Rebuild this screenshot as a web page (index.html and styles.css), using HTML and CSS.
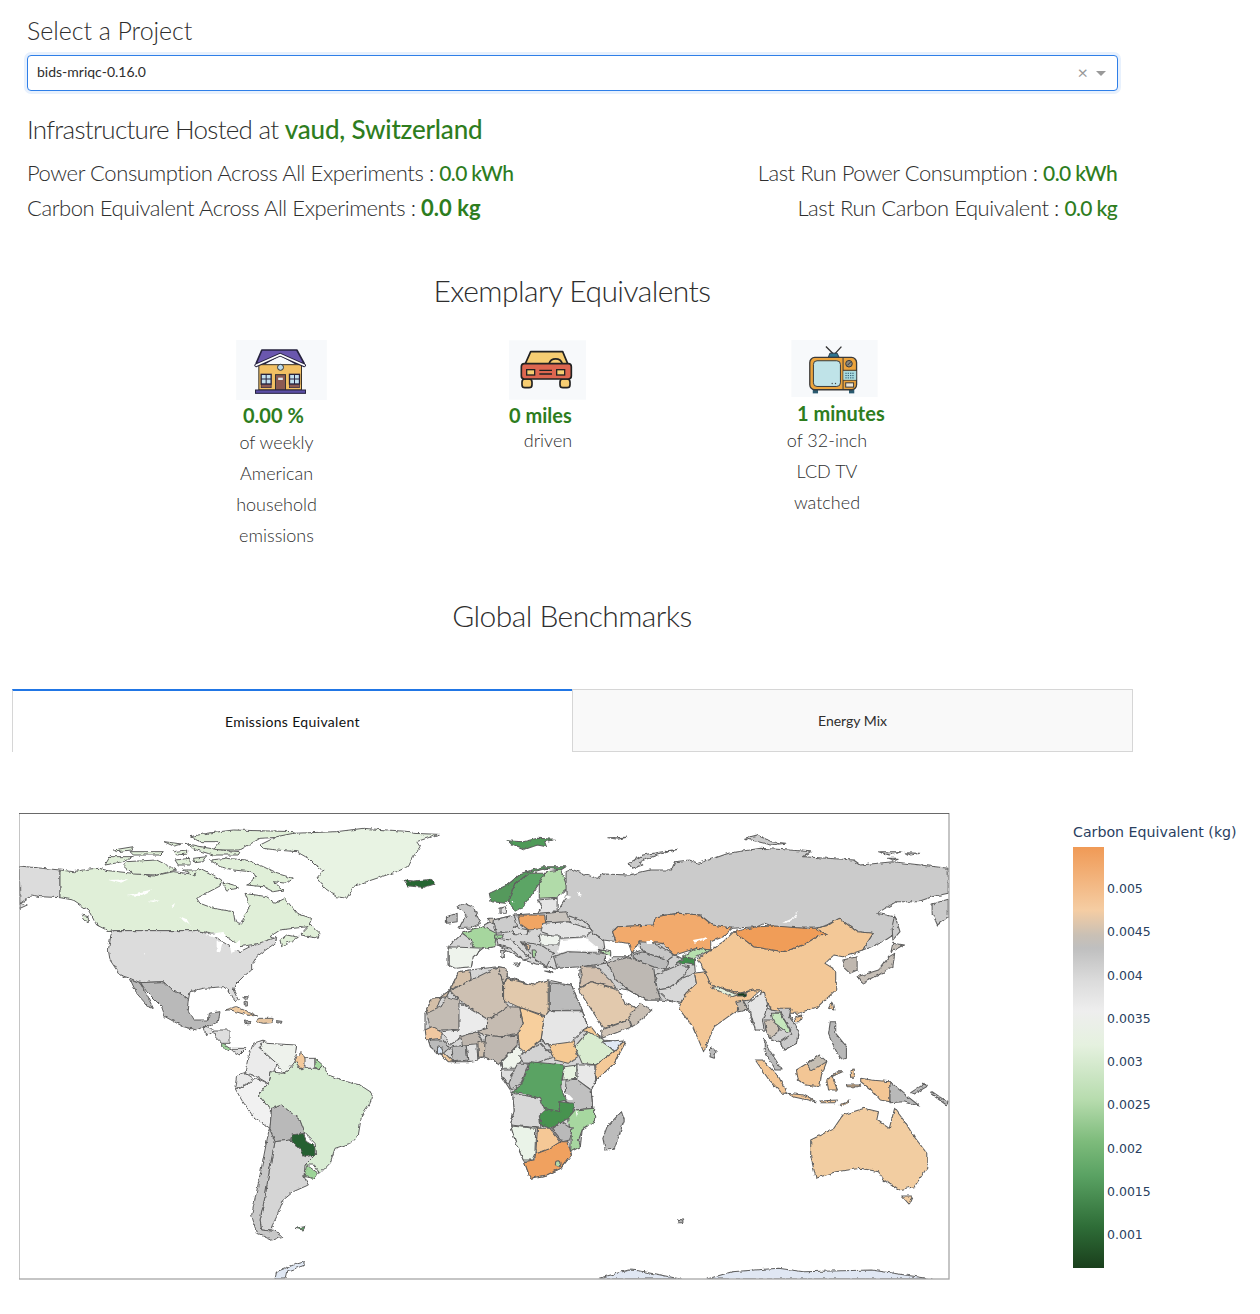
FILE: index.html
```html
<!DOCTYPE html>
<html lang="en">
<head>
<meta charset="UTF-8">
<meta name="viewport" content="width=device-width, initial-scale=1.0">
<title>Carbon Board</title>
<link rel="stylesheet" href="styles.css">
</head>
<body>
<div class="page">
    <section class="project">
        <h3 class="project-label">Select a Project</h3>
        <div class="select">
            <span class="select-value">bids-mriqc-0.16.0</span>
            <span class="select-clear">×</span>
            <span class="select-caret"></span>
        </div>
        <h3 class="hosted">Infrastructure Hosted at <span class="green-large">vaud, Switzerland</span></h3>
        <div class="stats">
            <div class="stats-col">
                <p>Power Consumption Across All Experiments : <span class="green-mid">0.0 kWh</span></p>
                <p>Carbon Equivalent Across All Experiments : <span class="green-bold">0.0 kg</span></p>
            </div>
            <div class="stats-col stats-right">
                <p>Last Run Power Consumption : <span class="green-mid">0.0 kWh</span></p>
                <p>Last Run Carbon Equivalent : <span class="green-mid">0.0 kg</span></p>
            </div>
        </div>
    </section>

    <h2 class="section-title title-equiv">Exemplary Equivalents</h2>

    <div class="equivalents">
        <div class="equiv equiv-house">
            <svg class="tile" width="91" height="60" viewBox="48 30 272 180">
                <rect x="48" y="30" width="272" height="180" fill="#f7f9fb"/>
                <path d="M125 60H230L252 100H225L180 74 135 100H108Z" fill="#6a57ae" stroke="#26233f" stroke-width="5" stroke-linejoin="round"/>
                <rect x="116" y="104" width="128" height="76" fill="#f2c063" stroke="#3a3328" stroke-width="3"/>
                <path d="M108 106 180 74 252 106" fill="none" stroke="#26233f" stroke-width="11" stroke-linecap="round"/>
                <path d="M108 106 180 74 252 106" fill="none" stroke="#fff" stroke-width="5" stroke-linecap="round"/>
                <circle cx="181" cy="112" r="9" fill="#bcdcee" stroke="#333" stroke-width="3"/>
                <rect x="166" y="134" width="30" height="46" fill="#8c5a52" stroke="#333" stroke-width="3"/>
                <rect x="174" y="143" width="14" height="7" fill="#dfe8ee"/>
                <rect x="123" y="133" width="30" height="29" fill="#c2e0ee" stroke="#26233f" stroke-width="4"/>
                <rect x="208" y="133" width="30" height="29" fill="#c2e0ee" stroke="#26233f" stroke-width="4"/>
                <path d="M138 133V162M123 147H153M223 133V162M208 147H238" stroke="#26233f" stroke-width="3"/>
                <rect x="123" y="163" width="30" height="10" fill="#8c5a52" stroke="#26233f" stroke-width="2"/>
                <rect x="208" y="163" width="30" height="10" fill="#8c5a52" stroke="#26233f" stroke-width="2"/>
                <rect x="106" y="180" width="150" height="10" fill="#5a4ea6" stroke="#26233f" stroke-width="3"/>
            </svg>
            <div class="equiv-value">0.00 %</div>
            <div class="equiv-text">of weekly American household emissions</div>
        </div>
        <div class="equiv equiv-car">
            <svg class="tile" width="77" height="60" viewBox="27 30 231 178">
                <rect x="27" y="30" width="231" height="178" fill="#f7f9fb"/>
                <path d="M75 102 92 64H188L204 102Z" fill="#f6cd72" stroke="#222" stroke-width="5" stroke-linejoin="round"/>
                <path d="M147 100A21 21 0 0 1 187 100" fill="none" stroke="#222" stroke-width="5"/>
                <rect x="66" y="146" width="30" height="26" rx="9" fill="#f6cd72" stroke="#222" stroke-width="5"/>
                <rect x="180" y="146" width="30" height="26" rx="9" fill="#f6cd72" stroke="#222" stroke-width="5"/>
                <rect x="64" y="100" width="150" height="46" rx="9" fill="#de6650" stroke="#222" stroke-width="5"/>
                <rect x="80" y="118" width="24" height="16" fill="#f6cd72" stroke="#222" stroke-width="4"/>
                <rect x="170" y="118" width="24" height="16" fill="#f6cd72" stroke="#222" stroke-width="4"/>
                <path d="M118 120H156M118 131H156" stroke="#222" stroke-width="4"/>
            </svg>
            <div class="equiv-value">0 miles</div>
            <div class="equiv-text">driven</div>
        </div>
        <div class="equiv equiv-tv">
            <svg class="tile" width="87" height="57" viewBox="33 30 262 173">
                <rect x="33" y="30" width="262" height="173" fill="#f7f9fb"/>
                <path d="M160 72 138 50M165 72 185 50" stroke="#333" stroke-width="4"/>
                <path d="M145 83 150 70H172L178 83Z" fill="#2f7590" stroke="#2a3a48" stroke-width="3"/>
                <rect x="98" y="178" width="16" height="14" fill="#2a5a70"/>
                <rect x="208" y="178" width="16" height="14" fill="#2a5a70"/>
                <rect x="89" y="83" width="142" height="98" rx="15" fill="#eca43c" stroke="#3a3a3a" stroke-width="4"/>
                <rect x="100" y="93" width="82" height="78" rx="11" fill="#bfe3e8" stroke="#3a3a3a" stroke-width="3"/>
                <path d="M190 83V181M190 122H231M190 152H231" stroke="#3a3a3a" stroke-width="3"/>
                <circle cx="208" cy="102" r="10" fill="#8a8a80" stroke="#3a3a3a" stroke-width="3"/>
                <path d="M203 107 213 97" stroke="#3a3a3a" stroke-width="3"/>
                <rect x="191" y="124" width="39" height="27" fill="#a9dbe0"/>
                <path d="M197 131H225M197 138H225M197 145H225" stroke="#2f5a70" stroke-width="3" stroke-dasharray="4 3"/>
                <rect x="198" y="160" width="24" height="13" fill="#ece6d8" stroke="#3a3a3a" stroke-width="3"/>
                <circle cx="157" cy="162" r="2" fill="#444"/>
                <circle cx="167" cy="162" r="2" fill="#444"/>
            </svg>
            <div class="equiv-value">1 minutes</div>
            <div class="equiv-text">of 32-inch LCD TV watched</div>
        </div>
    </div>

    <h2 class="section-title title-bench">Global Benchmarks</h2>

    <div class="tabs">
        <div class="tab tab-active">Emissions Equivalent</div>
        <div class="tab">Energy Mix</div>
    </div>

    <div class="chart">
        <svg class="map" width="931" height="467" viewBox="57 39 2793 1401">
            <defs>
                <filter id="rough" filterUnits="userSpaceOnUse" x="57" y="39" width="2790" height="1398">
                    <feTurbulence type="fractalNoise" baseFrequency="0.07" numOctaves="2" seed="4" result="noise"/>
                    <feDisplacementMap in="SourceGraphic" in2="noise" scale="11" xChannelSelector="R" yChannelSelector="G"/>
                    <feGaussianBlur stdDeviation="1.3"/>
                </filter>
            </defs>
            <g filter="url(#rough)">
            <g class="countries">
                <!-- americas -->
                <path fill="#dcdcdc" d="M58 198 180 210V293L120 290 95 285 75 300 60 310 82 315 60 325Z"/>
                <path fill="#e0efd8" d="M180 210 220 215 260 208 295 205 325 212 400 220 460 228 520 215 575 222 600 205 640 225 665 240 660 258 590 295 600 310 640 325 700 335 705 365 725 372 735 340 750 320 735 280 800 290 825 310 855 295 890 340 935 355 925 380 880 385 840 390 810 410 830 420 790 430 750 435 720 440 690 415 640 400 590 392H340L330 395 290 375 265 330 220 300 180 293Z"/>
                <path fill="#e0efd8" d="M630 180 680 175 740 180 790 200 830 220 880 235 860 250 820 245 850 270 820 275 790 260 740 255 770 230 750 215 700 210 660 200Z"/>
                <path fill="#e0efd8" d="M570 110 620 100 700 90 880 95 870 110 780 115 720 150 640 150 660 125 600 125Z"/>
                <path fill="#e0efd8" d="M380 185 470 180 530 210 470 225 400 222 370 195Z"/>
                <path fill="#e0efd8" d="M315 195 330 170 400 170 370 185Z"/>
                <path fill="#e0efd8" d="M340 150 400 140 395 150 350 155Z"/>
                <path fill="#e0efd8" d="M390 155 490 155 480 165 400 165Z"/>
                <path fill="#e0efd8" d="M492 125 545 132 520 138Z"/>
                <path fill="#e0efd8" d="M520 155 560 150 560 162 530 165Z"/>
                <path fill="#e0efd8" d="M525 180 570 175 570 195 535 195Z"/>
                <path fill="#e0efd8" d="M580 175 620 170 610 185 585 188Z"/>
                <path fill="#e0efd8" d="M555 130 600 140 660 150 720 155 715 165 640 165 590 150Z"/>
                <path fill="#e0efd8" d="M550 210 590 210 585 228Z"/>
                <path fill="#e0efd8" d="M665 245 700 255 715 265 680 270Z"/>
                <path fill="#e0efd8" d="M900 405 930 372 960 400 955 415Z"/>
                <path fill="#e0efd8" d="M840 420 860 405 895 412 860 430 845 440Z"/>
                <path fill="#e0efd8" d="M245 345 265 350 265 365 250 360Z"/>
                <path fill="#e8f3e3" d="M780 135 830 110 880 100 1010 95 1090 85 1230 95 1240 100 1315 103 1250 125 1260 140 1240 170 1225 200 1190 215 1100 245 1060 260 1040 295 1010 290 975 265 950 235 970 210 945 195 925 175 890 155 830 150 790 145Z"/>
                <path fill="#286630" d="M1212 240 1240 243 1295 238 1305 252 1270 262 1225 258Z"/>
                <path fill="#dcdcdc" d="M340 392H590L640 405 660 420 690 440 720 455 760 435 830 412 825 430 790 455 770 470 755 495 755 510 730 530 705 555 700 570 715 600 705 605 690 575 670 560 610 565 570 575 565 600 540 580 510 565 490 545 420 548 390 535 360 525 330 480 325 450 332 410Z"/>
                <path fill="#b9b9b9" d="M390 537 420 548 490 545 510 565 540 580 565 600 562 630 580 660 625 660 628 640 660 635 655 665 625 680 610 680 590 690 550 680 495 650 485 620 440 575 420 545 460 625 445 620 410 580Z"/>
                <path fill="#e5e5e5" d="M610 680H625L640 695 625 705 612 695Z"/>
                <path fill="#dedede" d="M640 690H690V730H665L645 710Z"/>
                <path fill="#9ed29a" d="M665 730 690 745 680 750 665 740Z"/>
                <path fill="#dddddd" d="M695 745H740L720 765 700 755Z"/>
                <path fill="#efcaa0" d="M675 630 710 620 770 648 740 645 690 630Z"/>
                <path fill="#e6c5a0" d="M775 655H820L815 668 790 670 770 665Z"/>
                <path fill="#aaaaaa" d="M733 663 750 665 748 672 735 670Z"/>
                <path fill="#aaaaaa" d="M830 662 846 664 844 670 832 668Z"/>
                <path fill="#b9b9b9" d="M730 590 745 590 740 600ZM732 605 742 605 742 618 733 618Z"/>
                <path fill="#ebebeb" d="M745 770 760 730 790 720 780 745 830 790 825 825 810 815 805 850 770 830 735 818Z"/>
                <path fill="#eef2ec" d="M790 720 800 730 890 735 885 770 895 785 865 810 850 820 830 790 780 745Z"/>
                <path fill="#f3c99b" d="M890 770 905 755 920 785 905 810 885 785Z"/>
                <path fill="#eeeeee" d="M915 775H945V805H915Z"/>
                <path fill="#a6d9a0" d="M945 775 968 795 955 810 945 805Z"/>
                <path fill="#e8e8e8" d="M710 825 735 818 760 835 720 865 705 860Z"/>
                <path fill="#f1f1f1" d="M705 865H720L770 835 805 850 775 885 800 915 815 925 810 985 760 950 725 900Z"/>
                <path fill="#b9b9b9" d="M815 925 845 915 900 960 915 1000 875 1010 870 1020 825 1025 810 985Z"/>
                <path fill="#d8ecd3" d="M810 815 850 820 865 810 885 785 905 810 915 805H945L955 810 968 795 985 825 1040 845 1080 855 1118 880 1110 910 1085 945 1075 1005 1050 1030 1005 1045 990 1090 960 1120 940 1095H915L950 1060 945 1030 915 1000 900 960 845 915 815 925 800 915 775 885 805 850Z"/>
                <path fill="#d5d5d5" d="M825 1025 870 1020 900 1045 915 1070 950 1060 915 1095 912 1130 925 1155 880 1175 850 1200 830 1250 815 1280 830 1295 785 1290 780 1260 795 1190 810 1100Z"/>
                <path fill="#c8c8c8" d="M808 985 825 1025 810 1100 795 1190 780 1260 785 1290 830 1295 850 1312 815 1320 770 1300 755 1245 775 1150 795 1050Z"/>
                <path fill="#256030" d="M875 1005 910 1000 920 1025 945 1040 945 1065 915 1070 900 1045 875 1025Z"/>
                <path fill="#9dd498" d="M920 1095 955 1120 945 1135 912 1130Z"/>
                <path fill="#5fa567" d="M885 1285 915 1280 910 1290Z"/>
                <path fill="#e0e8f4" d="M825 1437 830 1415 880 1395 915 1385V1395L860 1415 855 1437Z"/>
            </g>
            <g class="lakes">
                <path d="M325 240 385 238 360 250ZM380 285 460 268 420 288ZM445 302 480 300 460 306ZM515 320 525 312 520 326ZM538 348 560 358 572 378 550 362ZM615 405 670 395 680 412 640 412ZM650 425 668 425 660 457 650 455ZM690 440 720 420 720 448 695 458ZM430 460 435 460 432 465Z"/>
            </g>
            <g class="countries" transform="translate(1200 0) scale(1.0714 1)">
                <!-- land underlays so neighbours meet without gaps -->
                <path fill="#d5d5d5" d="M165 515 195 510 275 500 300 505V530L370 555 415 540 480 555 510 630 525 680 565 720 630 725 600 790 550 840 535 870 540 925 545 965 510 990 505 1040 478 1055 480 1065 450 1105 410 1125 365 1135 348 1085 325 1030 310 975 320 930 315 880 285 830V805L280 790 235 770 190 785H150L118 768 85 740 70 690V640L90 595 130 590Z"/>
                <path fill="#d5d5d5" d="M135 440 175 400 230 378 262 360 320 345 385 340 440 335 480 350 525 370 540 400 570 420 575 460V490L440 505 410 500 345 480 275 435 235 445 205 470 200 500 135 495Z"/>
                <path fill="#d0d0d0" d="M500 565 505 500 575 490 595 470H640L650 460 735 430 770 465 825 495 830 550 785 610 730 600H690L640 570 610 565 535 545Z"/>
                <path fill="#d0d0d0" d="M950 580 1040 630 1090 640 1115 690 1110 730 1075 750 1065 725 1035 715 1025 690H995L975 630Z"/>
                <!-- europe -->
                <path fill="#4f9a58" d="M297 122 345 125 385 115 435 118 405 125 410 140 385 135 350 148 320 135Z"/>
                <path fill="#b1dba9" d="M390 240 410 215 450 210 470 265 440 292 390 295Z"/>
                <path fill="#54995c" d="M250 280 300 255 340 220 400 200 465 200 450 210 410 205 360 220 320 255 310 295 295 310 255 305Z"/>
                <path fill="#5ba565" d="M320 255 360 220 405 220 390 250 365 290 345 320 320 335 305 300Z"/>
                <path fill="#cbcbcb" d="M465 215 480 208 550 235 570 222 640 225 700 210H760L770 185 810 180 835 190 880 175 920 160 1010 145 1090 150 1150 155 1130 170 1270 180 1290 195 1380 185 1535 205V280L1490 290 1450 305H1390L1335 340 1385 350 1395 395 1360 420 1320 440 1295 450 1325 400 1280 395 1230 355 1195 375 1165 385H1130L1050 380 1020 370 1000 380 930 385 875 375 840 345 780 340 715 350 710 375 610 380 595 395 605 425 570 420 540 400 525 370 480 350 440 335 465 295Z"/>
                <path fill="#cbcbcb" d="M1490 312 1535 298V350L1505 375 1490 340Z"/>
                <path fill="#cbcbcb" d="M640 190 680 165 778 148 720 165 670 185 680 195 650 205Z"/>
                <path fill="#cbcbcb" d="M965 115 1000 105 1040 125 1080 130 1040 135Z"/>
                <path fill="#cbcbcb" d="M582 113 635 112 610 118Z"/>
                <path fill="#cbcbcb" d="M1340 155 1405 155 1370 165ZM1415 158 1455 160 1430 165ZM1365 175 1395 175 1380 180Z"/>
                <path fill="#c8c8c8" d="M160 320 180 310 205 320 225 370 195 385 165 385 185 345Z"/>
                <path fill="#bbbbbb" d="M130 350 160 340V365L130 370Z"/>
                <path fill="#cccccc" d="M262 360 320 345 330 385 305 395 270 400Z"/>
                <path fill="#c8c3bd" d="M410 340 465 335 475 365 410 368Z"/>
                <path fill="#f0a564" d="M330 345H405L410 385 360 390 335 370Z"/>
                <path fill="#e5e5e5" d="M385 300 440 295V335L385 340 395 320Z"/>
                <path fill="#e3e3e3" d="M400 370 470 365 540 390 520 410 450 415 395 395Z"/>
                <path fill="#eff3ed" d="M390 405H445V435H395Z"/>
                <path fill="#a6d69e" d="M175 400 230 378 270 400 265 440 205 450 200 420Z"/>
                <path fill="#eef3ec" d="M135 440 235 445 205 470 200 500 155 505 135 495Z"/>
                <path fill="#dddddd" d="M270 415 310 420 365 475 345 480 310 445 275 435Z"/>
                <path fill="#cccccc" d="M340 425 395 435 430 460 410 500 380 480Z"/>
                <path fill="#dddddd" d="M315 380 360 390 355 405 315 400Z"/>
                <path fill="#c9c2b8" d="M245 355H265L262 375Z"/>
                <path fill="#9fd79a" d="M265 405H290L285 415H265Z"/>
                <path fill="#e5e5e5" d="M280 325 295 320 300 340H280Z"/>
                <path fill="#f0c79e" d="M345 430 365 440 360 447Z"/>
                <path fill="#a6d69e" d="M370 450 378 450 380 472 372 472Z"/>
                <path fill="#bfbfbf" d="M430 470 470 455 575 460V490L505 500 440 505Z"/>
                <path fill="#b8deb0" d="M555 448 590 455V465L565 460Z"/>
                <path fill="#dddddd" d="M282 448 292 450 292 475 282 470ZM315 490 340 488 330 500ZM405 513 430 515 425 519Z"/>
                <!-- africa -->
                <path fill="#d4bfa8" d="M130 590 165 515 195 510 200 540 140 570 115 590 100 635 70 640 90 595Z"/>
                <path fill="#cdc0b2" d="M140 572 200 540 275 500 290 555V600L305 620 245 658 165 600Z"/>
                <path fill="#c9bdb1" d="M275 500 300 505V530L290 555Z"/>
                <path fill="#e2c9ac" d="M290 555 300 535 370 555 415 540V650L330 620 290 600Z"/>
                <path fill="#bbbbbb" d="M418 548 480 555 510 630 418 632Z"/>
                <path fill="#e6e6e6" d="M418 632H510L525 680 485 720 480 745 415 735 395 720 400 680 405 650Z"/>
                <path fill="#f7cf9d" d="M335 622 405 650 400 680 395 720 355 755 335 745 330 700 345 670Z"/>
                <path fill="#c5bbb1" d="M245 658 305 620 335 622 345 670 330 700 280 710 240 705 215 695 245 680Z"/>
                <path fill="#ebebeb" d="M160 605 245 658V685L215 695 175 710 140 735 115 695 165 690Z"/>
                <path fill="#c3bcb4" d="M75 640 115 620 130 590 165 600V688L115 690 85 685Z"/>
                <path fill="#f0c7a0" d="M70 690 90 680 115 695V715L75 720Z"/>
                <path fill="#bbbbbb" d="M85 720H120L140 745 110 765 85 740Z"/>
                <path fill="#d8e5f4" d="M105 740 120 745 115 765 105 760Z"/>
                <path fill="#efca9f" d="M120 755 150 785H135L118 768Z"/>
                <path fill="#bbbbbb" d="M145 740 185 735 190 780 150 785Z"/>
                <path fill="#e2e2e2" d="M185 730H215L218 780 190 785Z"/>
                <path fill="#bdb5ad" d="M170 710 215 695 235 730 175 735Z"/>
                <path fill="#cfc0af" d="M218 725 240 720 235 770 220 772Z"/>
                <path fill="#bfb8b1" d="M240 705 280 710 330 705 328 735 280 790 235 770Z"/>
                <path fill="#eff4ec" d="M283 788 325 740 335 745 350 765 335 790 330 805 285 805Z"/>
                <path fill="#d3d3d3" d="M335 765 395 730 430 770 380 790H345Z"/>
                <path fill="#f5c993" d="M415 735 485 725 498 770 470 790 435 780Z"/>
                <path fill="#d9ecd0" d="M490 740 525 695 565 715 600 755 550 795 510 790Z"/>
                <path fill="#f5c993" d="M510 690 535 680 560 715 525 695Z"/>
                <path fill="#e0e8f4" d="M565 725 625 720 605 755Z"/>
                <path fill="#f4c998" d="M625 725 630 730 600 790 550 840 548 795 600 755Z"/>
                <path fill="#e8e8e8" d="M495 795H545L548 840 535 870 495 840Z"/>
                <path fill="#e6f2e0" d="M460 800 495 795V835L455 840Z"/>
                <path fill="#c0c0c0" d="M465 840 495 838 535 870 540 925 490 930 462 900Z"/>
                <path fill="#dddddd" d="M285 810H330L320 855 300 850 285 830Z"/>
                <path fill="#c4c4c4" d="M330 790H360L340 850 310 868 305 850 320 810Z"/>
                <path fill="#5aa363" d="M365 785 460 795 450 860 465 900 445 905 450 935 400 925 390 895 340 878 315 875 340 855Z"/>
                <path fill="#479350" d="M390 945 400 925 450 935 445 905 485 910V945L455 965 420 985 395 975Z"/>
                <path fill="#a7d7a0" d="M470 955 490 930 545 925V965L510 990 500 1020 505 1040 478 1055 480 990 470 965Z"/>
                <path fill="#d8d8d8" d="M315 880 390 895 405 930 390 945 395 985 310 975 320 930Z"/>
                <path fill="#eaf3e8" d="M310 978 380 985 378 1060 370 1080H345L325 1030Z"/>
                <path fill="#f5c896" d="M385 985H420L450 1025 415 1050 380 1062Z"/>
                <path fill="#b9b9b9" d="M425 985 455 965 482 985 475 1020 455 1025Z"/>
                <path fill="#f0a15e" d="M348 1085 375 1080 380 1062 415 1048 450 1025H470L480 1065 450 1105 410 1125 365 1135Z"/>
                <circle fill="#b0d8a8" cx="443" cy="1090" r="8"/>
                <path fill="#bcbcbc" d="M620 935 628 960 600 1048 575 1050 568 1015 580 980Z"/>
                <!-- asia -->
                <path fill="#d3c0ae" d="M505 500 550 500 590 540 605 565 535 545 500 565 510 525Z"/>
                <path fill="#e2c9ad" d="M500 570 535 545 610 570 630 610 665 625 640 660 570 685 555 660Z"/>
                <path fill="#d1c4b6" d="M565 690 640 660 650 680 565 715Z"/>
                <path fill="#c9bfb4" d="M640 650 675 610 705 630 665 670 650 680Z"/>
                <path fill="#bdb8b3" d="M580 490 640 470 710 500 715 545 730 600H690L640 570 605 540Z"/>
                <path fill="#bbbbbb" d="M650 465 680 455 750 480 745 510 710 500 660 480Z"/>
                <path fill="#c7c7c7" d="M670 420 710 430 770 465 750 480 680 455 670 440Z"/>
                <path fill="#f2aa6c" d="M595 395 610 380 710 375 715 350 780 340 840 345 875 375 930 385 905 410 870 425V450L830 445 770 465 735 430 670 425 650 460 640 430 605 425Z"/>
                <path fill="#b6dfae" d="M795 465 830 445 868 450 820 478 795 475Z"/>
                <path fill="#3f8d4b" d="M775 490 800 470 825 478V495L790 490Z"/>
                <path fill="#cfcfcf" d="M715 525 780 495 810 500 790 535 750 565 720 570Z"/>
                <path fill="#d8d8d8" d="M720 570 755 565 790 535 825 520 830 550 800 580 785 610 750 600Z"/>
                <path fill="#f3c897" d="M835 475 870 450 905 425 935 395 990 440 1075 455 1130 435 1170 405H1195L1165 385 1200 375 1230 355 1280 395 1325 400 1295 450 1240 470 1215 465 1190 490 1220 510V570L1170 620 1115 640H1090L1040 630 1010 570H990L950 580 870 555 855 520Z"/>
                <path fill="#f09d58" d="M935 395 1000 380 1050 378 1130 385H1165L1197 405 1170 408 1130 435 1075 455 990 440Z"/>
                <path fill="#f3c695" d="M825 520 855 515 870 555 950 580 990 570H1010L980 600 945 605V630L880 680 850 755 820 680 780 625 800 580 830 550Z"/>
                <path fill="#e3f0dc" d="M870 562 890 560 945 585 930 590Z"/>
                <path fill="#163d1b" d="M945 580 970 578V588H945Z"/>
                <path fill="#bfb8b0" d="M940 605 960 600 975 630 950 635Z"/>
                <path fill="#e5e5e5" d="M975 610 1020 575 1030 620 1015 660 1020 690H995Z"/>
                <path fill="#cfc3b5" d="M1020 660H1045L1065 690 1035 715 1025 690Z"/>
                <path fill="#c9c9c9" d="M1060 625H1095L1090 650 1115 690 1110 730 1075 750 1065 725 1100 700 1065 640Z"/>
                <path fill="#c6e7bd" d="M1040 640H1065L1095 695H1080L1045 665Z"/>
                <path fill="#c0b8b0" d="M1240 480 1280 470V510L1260 520 1245 505Z"/>
                <path fill="#c6bfb7" d="M1280 530 1340 510 1370 470 1385 460 1380 500 1340 525 1295 550Z"/>
                <path fill="#c6bfb7" d="M1380 430 1410 435 1375 455Z"/>
                <path fill="#cbcbcb" d="M1385 345 1400 395 1380 420 1378 380Z"/>
                <path fill="#f3c695" d="M1210 605 1215 630 1200 625Z"/>
                <path fill="#f3c695" d="M1105 650 1125 645 1120 665 1108 665Z"/>
                <path fill="#bbbbbb" d="M870 740 885 755 880 775 868 770Z"/>
                <path fill="#b8b8b8" d="M1205 665H1220V700L1250 740V775L1235 780 1215 740 1200 700Z"/>
                <path fill="#bbbbbb" d="M1020 715 1040 760 1070 810H1050L1020 750Z"/>
                <path fill="#f3c695" d="M995 780H1015L1060 830 1085 880H1070L1030 835Z"/>
                <path fill="#f3c695" d="M1085 880 1130 885 1165 905 1100 890Z"/>
                <path fill="#f3c695" d="M1110 810 1170 770 1195 785 1180 825 1175 860 1135 855 1115 840Z"/>
                <path fill="#c5beb3" d="M1140 790 1175 765 1195 785 1150 815Z"/>
                <path fill="#f3c695" d="M1195 840 1225 815H1240L1210 830 1225 870H1200Z"/>
                <path fill="#f3c695" d="M1290 835 1320 840 1372 845V905L1345 900 1320 870 1290 845Z"/>
                <path fill="#b9b9b9" d="M1372 845 1410 880 1455 918 1410 905 1372 908Z"/>
                <path fill="#f3c695" d="M1260 812 1272 810 1272 832 1262 832ZM1250 855 1290 855 1285 860 1252 860ZM1175 903 1225 900 1220 908 1178 908ZM1230 915 1260 900 1255 908 1235 918Z"/>
                <path fill="#b9b9b9" d="M1430 878 1470 850 1475 860 1440 882ZM1490 875 1535 908 1530 915 1488 882Z"/>
                <path fill="#f2cda1" d="M1150 1020 1215 985 1240 945 1300 925 1340 935 1335 960 1370 985 1385 925 1410 960 1440 1010 1475 1060V1105L1440 1160 1395 1170 1355 1140 1340 1115 1290 1105 1220 1115 1165 1135 1150 1070Z"/>
                <path fill="#f2cda1" d="M1405 1188H1435L1425 1212Z"/>
                <path fill="#b5b5b5" d="M778 1258 792 1260V1268H778Z"/>
                <path fill="#e0e7f3" d="M550 1437 640 1410 670 1412 785 1437Z"/>
                <path fill="#e0e7f3" d="M860 1437 930 1415 1060 1405 1130 1415 1320 1410 1490 1437Z"/>
            </g>
            <g class="lakes" transform="translate(1200 0) scale(1.0714 1)">
                <path d="M460 285 480 290 470 294ZM495 275 510 285 500 288ZM1070 368 1100 355 1115 335 1110 350 1085 368ZM820 420 860 412 860 416 825 428ZM690 420 706 420 706 432 690 432ZM450 860 470 900 485 900 458 870ZM315 303 325 303 318 308ZM490 920 498 945 495 950Z"/>
                <path d="M450 420 520 414 550 440 555 452 470 452 442 460Z"/>
            </g>
            </g>
            <rect class="map-frame" x="57" y="39" width="2790" height="1398"/>
            <path class="map-frame-top" d="M57 39H2847"/>
        </svg>
        <div class="legend">
            <div class="legend-title">Carbon Equivalent (kg)</div>
            <div class="legend-body">
                <div class="legend-bar"></div>
                <div class="legend-ticks">
                    <span>0.005</span>
                    <span>0.0045</span>
                    <span>0.004</span>
                    <span>0.0035</span>
                    <span>0.003</span>
                    <span>0.0025</span>
                    <span>0.002</span>
                    <span>0.0015</span>
                    <span>0.001</span>
                </div>
            </div>
        </div>
    </div>
</div>
</body>
</html>
```

FILE: styles.css
```css
body {
    margin: 0;
    background-color: #fff;
    font-family: Lato, "Liberation Sans", sans-serif;
    font-weight: 300;
    color: #2e2e2e;
}
p, h2, h3 {
    margin: 0;
    font-weight: 300;
}
.page {
    width: 1240px;
    padding-left: 12px;
    padding-top: 14px;
}
.project {
    width: 1090px;
    padding-left: 15px;
}
.project-label {
    font-size: 25px;
    line-height: 32px;
    letter-spacing: -0.05px;
}
.select {
    height: 31px;
    margin-top: 9px;
    margin-right: -1px;
    display: flex;
    align-items: center;
    padding-left: 9px;
    padding-right: 11px;
    padding-bottom: 3px;
    background-color: #fff;
    border: 1px solid #2f7fe8;
    border-radius: 4px;
    box-shadow: 0 0 0 3px #e8f1fd;
}
.select-value {
    flex: 1;
    font-size: 14px;
    font-weight: 400;
}
.select-clear {
    font-size: 18px;
    font-weight: 400;
    color: #999;
    line-height: 18px;
    margin-right: 8px;
}
.select-caret {
    width: 0;
    height: 0;
    margin-top: 3px;
    border-left: 5px solid transparent;
    border-right: 5px solid transparent;
    border-top: 5px solid #999;
}
.hosted {
    margin-top: 21px;
    font-size: 26px;
    line-height: 34px;
    letter-spacing: -0.73px;
}
.green-large {
    color: #2e7d1e;
    font-weight: 500;
    letter-spacing: -0.2px;
}
.green-mid {
    color: #2e7d1e;
    font-weight: 500;
    font-size: 21px;
    letter-spacing: -0.65px;
}
.green-bold {
    color: #2e7d1e;
    font-weight: 700;
    letter-spacing: 0;
}
.stats {
    display: flex;
    justify-content: space-between;
    margin-top: 9px;
}
.stats-col p {
    font-size: 22px;
    line-height: 35px;
    letter-spacing: -0.42px;
}
.stats-right {
    text-align: right;
}
.section-title {
    width: 1120px;
    text-align: center;
    font-size: 30px;
    line-height: 40px;
    letter-spacing: -0.55px;
}
.title-equiv {
    margin-top: 45px;
}
.title-bench {
    margin-top: 44px;
}
.equivalents {
    display: grid;
    grid-template-columns: 273px 282px 1fr;
    margin-top: 30px;
    padding-left: 224px;
}
.tile {
    display: block;
}
.equiv-value {
    color: #2e7d1e;
    font-weight: 700;
    font-size: 20px;
    line-height: 24px;
    padding-top: 3px;
    white-space: nowrap;
}
.equiv-text {
    font-size: 18px;
    line-height: 31px;
    text-align: center;
}
.equiv-house .equiv-value {
    margin-left: 7px;
}
.equiv-house .equiv-text {
    width: 81px;
}
.equiv-car .equiv-text {
    width: 78px;
    margin-top: -2px;
}
.equiv-tv .equiv-value {
    margin-left: 6px;
    margin-top: 1px;
}
.equiv-tv .equiv-text {
    width: 90px;
    margin-left: -9px;
}
.tabs {
    display: flex;
    width: 1121px;
    margin-top: 54px;
}
.tab {
    flex: 1;
    height: 63px;
    display: flex;
    align-items: center;
    justify-content: center;
    box-sizing: border-box;
    font-size: 14px;
    font-weight: 400;
    background-color: #f9f9f9;
    border: 1px solid #d6d6d6;
}
.tab-active {
    background-color: #fff;
    color: #111;
    letter-spacing: 0.35px;
    border: none;
    border-left: 1px solid #d6d6d6;
    border-top: 2px solid #2176e5;
}
.chart {
    display: flex;
    align-items: flex-start;
    margin-top: 61px;
    margin-left: 7px;
}
.map {
    display: block;
    flex: none;
}
.countries path,
.countries circle {
    stroke: #5f5f5f;
    stroke-width: 3;
    stroke-linejoin: round;
}
.lakes path {
    fill: #fff;
}
.map-frame {
    fill: none;
    stroke: #a8a8a8;
    stroke-width: 4;
}
.map-frame-top {
    fill: none;
    stroke: #4a4a4a;
    stroke-width: 4;
}
.legend {
    margin-left: 123px;
    margin-top: 9px;
    font-family: "DejaVu Sans", Verdana, sans-serif;
    font-weight: 400;
    color: #2a3f5f;
}
.legend-title {
    font-size: 14.2px;
    line-height: 20px;
    white-space: nowrap;
}
.legend-body {
    display: flex;
    margin-top: 5px;
}
.legend-bar {
    width: 31px;
    height: 421px;
    background: linear-gradient(to bottom, #f09a56 0%, #f5cda3 15%, #c9c0b5 21%, #bfbfbf 24%, #dcdcdc 32%, #eeeeee 39%, #e5f1df 47%, #b7dcae 60%, #7dbb7b 70%, #5aa263 78%, #2f6e38 90%, #1a3f1c 100%);
}
.legend-ticks {
    display: flex;
    flex-direction: column;
    margin-left: 3px;
    padding-top: 20px;
    font-size: 12.5px;
}
.legend-ticks span {
    height: 43.3px;
    line-height: 43.3px;
}
```
